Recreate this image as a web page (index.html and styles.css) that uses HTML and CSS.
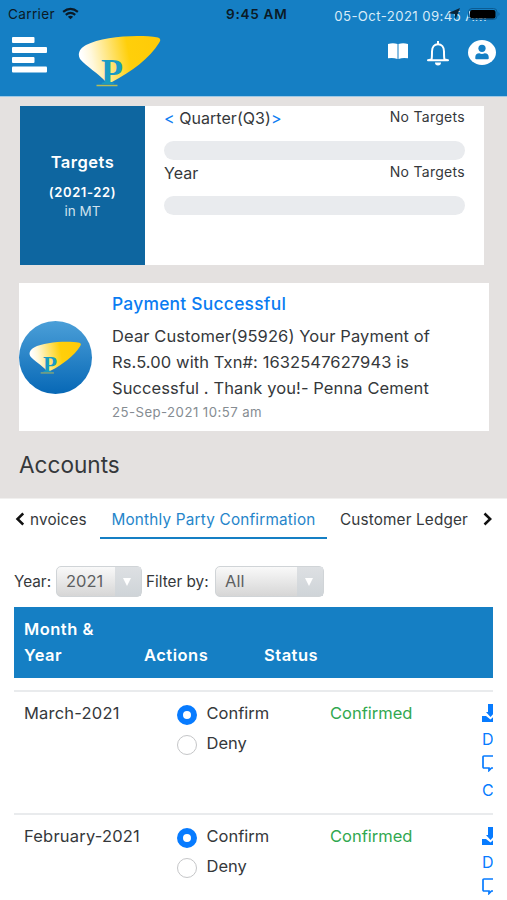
FILE: index.html
```html
<!DOCTYPE html>
<html lang="en">
<head>
<meta charset="utf-8">
<title>Accounts</title>
<link rel="stylesheet" href="styles.css">
</head>
<body>
<svg class="defs" width="0" height="0" aria-hidden="true">
  <defs>
    <linearGradient id="gold" x1="0" y1="0.1" x2="1" y2="0">
      <stop offset="0" stop-color="#fff"/><stop offset=".12" stop-color="#fff8dc"/><stop offset=".58" stop-color="#ffcf0a"/><stop offset="1" stop-color="#ffca08"/>
    </linearGradient>
    <symbol id="leaf" viewBox="0 0 84 52">
      <path d="M28 47C21 39 8 31 2 24C-1 19 2 13 8 10C24 2 58-1 80 2.500Q84 4 81 8C72 23 53 37 34 47Z" fill="url(#gold)"/>
      <path d="M18.500 50.500H39.500" stroke="#b8bd55" stroke-width="1.500"/>
    </symbol>
    <symbol id="download" viewBox="0 0 18 18">
      <path d="M6 0h5v6.500H14.500l-6 6.500-4.500-5H6z"/><path d="M0 12h4L8.500 15.500l4-3.500H18v6H0z"/>
    </symbol>
    <symbol id="comment" viewBox="0 0 18 17">
      <path d="M2 1h14q1 0 1 1v10q0 1-1 1H9.500L7 15.500V13H2q-1 0-1-1V2q0-1 1-1z" fill="none" stroke="currentColor" stroke-width="1.700"/>
    </symbol>
  </defs>
</svg>
<header class="header">
  <svg class="menu" viewBox="0 0 35 36" fill="#fff"><rect width="22.500" height="6" rx="1"/><rect y="10" width="35" height="6" rx="1"/><rect y="20" width="22.500" height="6" rx="1"/><rect y="29.500" width="35" height="6" rx="1"/></svg>
  <div class="logo"><svg><use href="#leaf"/></svg><span>P</span></div>
  <div class="header-right">
    <div class="datetime">05-Oct-2021 09:45 AM</div>
    <div class="tools">
      <svg class="book" viewBox="0 0 20 16" fill="#fff"><path d="M0 1Q5-.500 9.500 1V16Q5 14.200 0 15.300ZM10.500 1Q15-.500 20 1V15.300Q15 14.200 10.500 16Z"/></svg>
      <svg class="bell" viewBox="0 0 22 25" fill="none" stroke="#fff" stroke-width="2"><path d="M11 0V3"/><path d="M4.500 18.500Q5 17 5 10.500C5 6 7.500 3.200 11 3.200S17 6 17 10.500Q17 17 17.500 18.500L21 19.200H1Z" stroke-linejoin="round"/><path d="M8 21.500h6a3 3 0 0 1-6 0z" fill="#fff" stroke="none"/></svg>
      <svg class="user" viewBox="0 0 28 25"><ellipse cx="14" cy="12.500" rx="14" ry="12.500" fill="#fff"/><circle cx="14" cy="8.300" r="3.600" fill="#157fc4"/><path d="M7.300 18.500v-1.500c0-2.200 1.500-3.700 4-3.700q2.700 1.200 5.400 0c2.500 0 4 1.500 4 3.700v1.500q0 .800-1 .800H8.300q-1 0-1-.800z" fill="#157fc4"/></svg>
    </div>
  </div>
  <div class="statusbar">
    <span class="carrier">Carrier</span>
    <svg class="wifi" viewBox="0 0 18 13" fill="none" stroke="#0b1a26"><path d="M1.200 4.800q7.800-6.200 15.600 0M4 7.900q5-4 10 0" stroke-width="2.300"/><path d="M6.200 9.900q2.800-2 5.600 0L9 12.600z" fill="#0b1a26" stroke="none"/></svg>
    <b class="clock">9:45 AM</b>
    <svg class="battery" viewBox="0 0 52 14"><path d="M0 6.300 12 1 7.500 12.500 6.700 7Z" fill="#0b2337"/><rect x="20.500" y="1.500" width="28.500" height="11" rx="3.500" fill="none" stroke="#0b5c94"/><rect x="22" y="3" width="25.500" height="8.500" rx="2" fill="#000"/><path d="M50.500 5v4q2-2 0-4z" fill="#0b5c94"/></svg>
  </div>
</header>

<main>
  <section class="targets">
    <div class="targets-title"><strong>Targets</strong><b>(2021-22)</b><span>in MT</span></div>
    <div class="targets-body">
      <div class="goal"><span><a>&lt;</a> Quarter(Q3)<a>&gt;</a></span><small>No Targets</small></div>
      <div class="bar"></div>
      <div class="goal year"><span>Year</span><small>No Targets</small></div>
      <div class="bar"></div>
    </div>
  </section>

  <section class="message">
    <div class="avatar"><div class="logo small"><svg><use href="#leaf"/></svg><span>P</span></div></div>
    <div class="message-text">
      <h3>Payment Successful</h3>
      <p>Dear Customer(95926) Your Payment of<br>Rs.5.00 with Txn#: 1632547627943 is<br>Successful . Thank you!- Penna Cement</p>
      <time>25-Sep-2021 10:57 am</time>
    </div>
  </section>

  <h2>Accounts</h2>

  <section class="accounts">
    <nav class="tabs">
      <svg class="chev" viewBox="0 0 10 14"><path d="M9.200 1.500 3.500 7 9.200 12.500"/></svg>
      <span class="tab invoices">nvoices</span>
      <span class="tab active">Monthly Party Confirmation</span>
      <span class="tab ledger">Customer Ledger</span>
      <svg class="chev" viewBox="0 0 10 14"><path d="M2.500 1.500 8.200 7 2.500 12.500"/></svg>
    </nav>
    <div class="filters">
      <label>Year:</label><div class="select"><span>2021</span><i></i></div>
      <label class="by">Filter by:</label><div class="select wide"><span>All</span><i></i></div>
    </div>
    <div class="table">
      <div class="thead"><span>Month &amp;<br>Year</span><span>Actions</span><span>Status</span></div>
      <div class="row">
        <span class="month">March-2021</span>
        <div class="options"><div><i class="radio on"></i>Confirm</div><div><i class="radio"></i>Deny</div></div>
        <span class="status">Confirmed</span>
        <div class="links"><svg class="dl"><use href="#download"/></svg><span>D</span><svg class="cm"><use href="#comment"/></svg><span>C</span></div>
      </div>
      <div class="row">
        <span class="month">February-2021</span>
        <div class="options"><div><i class="radio on"></i>Confirm</div><div><i class="radio"></i>Deny</div></div>
        <span class="status">Confirmed</span>
        <div class="links"><svg class="dl"><use href="#download"/></svg><span>D</span><svg class="cm"><use href="#comment"/></svg></div>
      </div>
    </div>
  </section>
</main>
</body>
</html>
```
FILE: styles.css
```css
* { box-sizing: border-box; }
html, body { height: 900px; overflow: hidden; }
body { margin: 0; background: #e4e1e0; color: #35383b; font: 16px/26px Inter, "Liberation Sans", sans-serif; }
svg { display: block; flex: none; }
.defs { position: absolute; }

.header { position: relative; height: 97px; background: #157fc4; border-bottom: 1px solid #9ec9e6; display: flex; align-items: flex-start; }
.menu { width: 35px; height: 36px; margin: 37px 0 0 12px; }
.logo { position: relative; width: 84px; height: 52px; margin: 35px 0 0 31px; }
.logo svg { width: 100%; height: 100%; }
.logo span { position: absolute; left: 23px; top: 19px; font: bold 36px/36px "Liberation Serif", serif; color: #199bc3; }
.header-right { margin-left: auto; padding: 7px 11px 0 0; }
.datetime { font-size: 13.2px; line-height: 18px; letter-spacing: .4px; color: #d7ebf8; white-space: nowrap; padding-right: 9px; }
.tools { display: flex; justify-content: flex-end; align-items: center; margin-top: 14px; }
.book { width: 20px; height: 16px; margin-top: -3px; }
.bell { width: 22px; height: 25px; margin: 2px 19px 0 19px; }
.user { width: 28px; height: 25px; }
.statusbar { position: absolute; inset: 0 0 auto 0; height: 27px; padding: 0 7px 0 8px; display: grid; grid-template-columns: 54px 164px 1fr 52px; align-items: center; color: #0b1a26; font-size: 13.6px; letter-spacing: .35px; }
.wifi { width: 17px; height: 13px; }
.clock { font-weight: 600; letter-spacing: .7px; }
.battery { width: 52px; height: 14px; }

.targets { display: flex; width: 464px; height: 159px; margin: 9px 0 0 20px; background: #fff; }
.targets-title { width: 125px; background: #0e66a0; color: #fff; display: flex; flex-direction: column; align-items: center; padding-top: 43px; }
.targets-title strong { font-size: 16.5px; font-weight: 600; letter-spacing: .5px; }
.targets-title b { font-size: 13px; font-weight: 600; line-height: 19px; margin-top: 8px; letter-spacing: .6px; }
.targets-title span { font-size: 13.5px; line-height: 18px; color: #cfe1ed; }
.targets-body { flex: 1; padding: 0 19px; }
.goal { display: flex; justify-content: space-between; height: 35px; line-height: 25px; white-space: nowrap; }
.goal > span { letter-spacing: .05px; }
.goal small { font-size: 14px; line-height: 22px; letter-spacing: .3px; }
.goal.year { height: 36px; line-height: 26px; }
.goal.year small { line-height: 23px; }
.goal a, h3 { color: #0a7cf2; }
.bar { height: 19px; border-radius: 10px; background: #e9ebee; }

.message { display: flex; align-items: center; width: 470px; height: 148px; margin: 18px 0 0 19px; background: #fff; }
.avatar { width: 73px; height: 73px; border-radius: 50%; background: linear-gradient(#4b9fd8, #0768b6); display: flex; align-items: flex-start; justify-content: center; }
.logo.small { width: 53px; height: 33px; margin: 20px 0 0 0; }
.small span { left: 14px; top: 12px; font-size: 23px; line-height: 23px; }
.message-text { margin: -1px 0 0 20px; white-space: nowrap; }
h3 { margin: 0; font-size: 17.4px; font-weight: 500; line-height: 26px; letter-spacing: .25px; }
p { margin: 7px 0 0; font-size: 16.5px; line-height: 25.7px; letter-spacing: .1px; }
time { display: block; font-size: 13.2px; line-height: 20px; color: #858c92; letter-spacing: .45px; }
h2 { margin: 0; padding: 17px 0 0 19px; height: 67px; font-size: 22.6px; line-height: 34px; font-weight: 400; }

.accounts { background: #fff; height: 402px; padding: 0 14px; border-top: 1px solid #f1f0ef; }
.tabs { display: flex; align-items: center; height: 40px; font-size: 15.3px; letter-spacing: .15px; white-space: nowrap; }
.tab { padding-top: 1px; }
.chev { width: 10px; height: 14px; fill: none; stroke: #111; stroke-width: 2.5; }
.invoices { width: 70px; margin: 0 0 0 6px; }
.active { width: 227px; height: 40px; line-height: 39px; text-align: center; letter-spacing: .2px; color: #2585ca; border-bottom: 2.5px solid #157fc4; }
.ledger { width: 142px; margin-left: 13px; }
.filters { display: flex; align-items: center; height: 31px; margin-top: 27px; font-size: 15.3px; white-space: nowrap; }
.filters label { width: 42px; }
.filters .by { width: 69px; margin-left: 4px; }
.select { display: flex; width: 86px; height: 31px; border: 1.5px solid #d0d4d7; border-radius: 5px; background: linear-gradient(#f9f9f9, #d6d6d6); color: #5d5f61; font-size: 16.5px; line-height: 29px; }
.select span { flex: 1; padding-left: 9px; }
.select i { display: flex; align-items: center; justify-content: center; width: 26px; padding-right: 2px; background: linear-gradient(#dde0e3, #cfd4d8); }
.select i::before { content: ""; border: 4.5px solid transparent; border-top: 8px solid #fff; border-bottom: 0; }
.select.wide { width: 109px; }
.table { margin-top: 10px; overflow: hidden; width: 479px; height: 293px; font-size: 16.5px; letter-spacing: .1px; }
.thead { height: 71px; background: #157fc4; color: #fff; font-weight: 600; letter-spacing: .5px; line-height: 25.5px; display: grid; grid-template-columns: 120px 120px 1fr; align-items: end; padding: 0 0 10px 10px; margin-bottom: 12px; }
.row { height: 123px; border-top: 2px solid #e9ebed; padding: 8px 0 0 10px; display: grid; grid-template-columns: 153px 153px 152px 90px; align-items: start; white-space: nowrap; }
.month { letter-spacing: .2px; }
.options { letter-spacing: 0; }
.options div { display: flex; align-items: center; height: 30px; margin-top: -2px; }
.options div + div { margin-top: 0; }
.radio { width: 20px; height: 20px; margin: 4px 9.5px 0 0; border: 1.5px solid #c5c6c8; border-radius: 50%; }
.radio.on { border: 6.5px solid #077bff; }
.status { color: #31a84f; letter-spacing: 0; }
.links { color: #077bff; display: flex; flex-direction: column; fill: #077bff; }
.links span { height: 25px; font-size: 16px; }
.dl { width: 18px; height: 18px; margin: 4px 0 4px; }
.cm { width: 18px; height: 17px; margin: 4px 0 5px; }
```
